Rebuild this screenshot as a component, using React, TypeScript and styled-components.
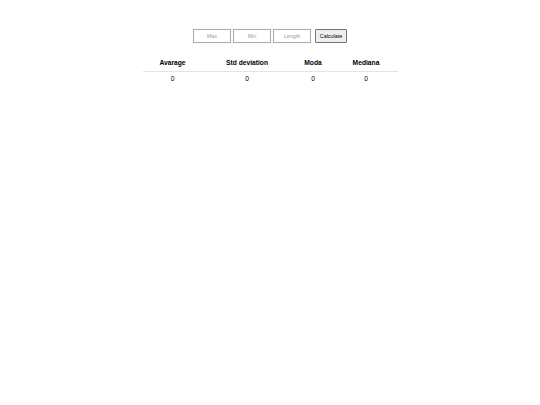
import React, { useState } from "react";
import styled, { createGlobalStyle } from "styled-components";

const Global = createGlobalStyle`
  html, body { margin: 0; padding: 0; background: #fff; }
  body { font-family: "Liberation Sans", Arial, sans-serif; color: #000; }
`;

const Page = styled.div`
  display: flex;
  flex-direction: column;
  align-items: center;
  padding-top: 29px;
`;

const Toolbar = styled.div`
  display: flex;
  gap: 2px;
  align-items: center;
`;

const Field = styled.input`
  box-sizing: border-box;
  width: 38px;
  height: 14px;
  padding: 0 2px;
  border: 1px solid #a9a9a9;
  font-family: "Liberation Sans", Arial, sans-serif;
  font-size: 5.4px;
  text-align: center;
  outline: none;
  &::placeholder { color: #9a9a9a; }
`;

const Button = styled.button`
  box-sizing: border-box;
  width: 32px;
  height: 14px;
  margin-left: 2px;
  padding: 0;
  border: 1px solid #767676;
  border-radius: 1px;
  background: #efefef;
  font-family: "Liberation Sans", Arial, sans-serif;
  font-size: 5.4px;
  color: #000;
`;

const Table = styled.table`
  margin-top: 14px;
  border-collapse: collapse;
  width: 255px;
  table-layout: fixed;
`;

const Head = styled.th<{ $w: number }>`
  box-sizing: border-box;
  width: ${(p) => p.$w}px;
  height: 14px;
  padding: 0 0 2px;
  font-size: 6.7px;
  font-weight: bold;
  text-align: center;
  border-bottom: 1px solid #e4e4e4;
`;

const Cell = styled.td`
  box-sizing: border-box;
  height: 14px;
  padding: 1px 0 0;
  font-size: 6.7px;
  text-align: center;
`;

export default function App() {
  const [max, setMax] = useState("");
  const [min, setMin] = useState("");
  const [len, setLen] = useState("");
  const cols = [
    { label: "Avarage", w: 60 },
    { label: "Std deviation", w: 89 },
    { label: "Moda", w: 43 },
    { label: "Mediana", w: 63 },
  ];
  return (
    <>
      <Global />
      <Page>
        <Toolbar>
          <Field placeholder="Max" value={max} onChange={(e) => setMax(e.target.value)} />
          <Field placeholder="Min" value={min} onChange={(e) => setMin(e.target.value)} />
          <Field placeholder="Length" value={len} onChange={(e) => setLen(e.target.value)} />
          <Button>Calculate</Button>
        </Toolbar>
        <Table>
          <thead>
            <tr>
              {cols.map((c) => (
                <Head key={c.label} $w={c.w}>{c.label}</Head>
              ))}
            </tr>
          </thead>
          <tbody>
            <tr>
              {cols.map((c) => (
                <Cell key={c.label}>0</Cell>
              ))}
            </tr>
          </tbody>
        </Table>
      </Page>
    </>
  );
}
